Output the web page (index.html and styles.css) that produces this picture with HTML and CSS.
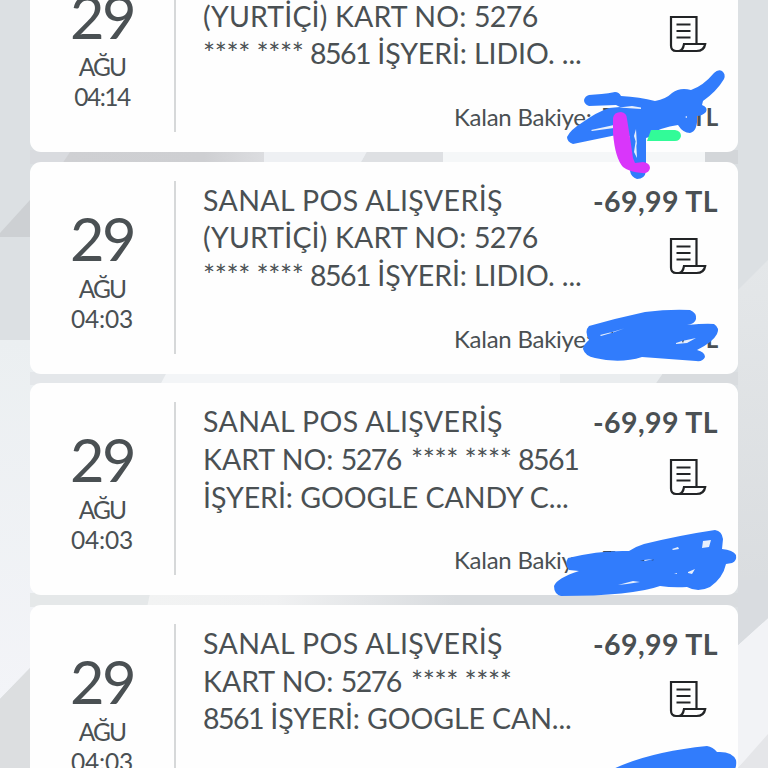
FILE: index.html
```html
<!DOCTYPE html>
<html lang="tr">
<head>
<meta charset="utf-8">
<title>Hesap Hareketleri</title>
<link rel="stylesheet" href="styles.css">
</head>
<body>
<svg class="backdrop" viewBox="0 0 768 768" aria-hidden="true">
  <defs>
    <linearGradient id="low" x1="0" x2="1"><stop offset="0" stop-color="#f2f3f3"/><stop offset=".42" stop-color="#f0f1f2"/><stop offset="1" stop-color="#d9dcdf"/></linearGradient>
    <linearGradient id="right" x1="0" x2="0" y1="0" y2="1"><stop offset="0" stop-color="#e4e7e9"/><stop offset="1" stop-color="#d8dbde"/></linearGradient>
    <linearGradient id="left" x1="0" x2="0" y1="0" y2="1"><stop offset="0" stop-color="#ebeff1"/><stop offset="1" stop-color="#f3f4f8"/></linearGradient>
    <linearGradient id="gray" x1="0" x2="1"><stop offset="0" stop-color="#cfd0d3"/><stop offset=".7" stop-color="#cecfd2"/><stop offset="1" stop-color="#dcdde0"/></linearGradient>
  </defs>
  <path fill="#dce0e3" d="M0 0h768v768H0z"/>
  <path fill="#d9dbdf" d="M30 150h50v14H30z"/>
  <path fill="url(#gray)" d="M70 152h194v12H62z"/>
  <path fill="#eef0f3" d="M264 150h104l-8 14h-96z"/>
  <path fill="#dee0e3" d="M367 152h76v12h-82z"/>
  <path fill="#f5f7f8" d="M443 150h262v14H443z"/>
  <path fill="#d3d6d9" d="M705 150h33v14h-33z"/>
  <path fill="#cdd0d3" d="M30 200v37H0v-4z"/>
  <path fill="url(#left)" d="M0 340h34v324L0 699z"/>
  <path fill="#dcdee0" d="M0 699l30-31v100H0z"/>
  <path fill="#e4e7ea" d="M30 372h138l-8 13H30z"/>
  <path fill="#f3f5f7" d="M167 372h393v13H160z"/>
  <path fill="#eaedef" d="M560 372h104l-9 13h-95z"/>
  <path fill="#d9dcdf" d="M664 372h74v13h-83z"/>
  <path fill="url(#right)" d="M738 290l30-30v358l-30 27z"/>
  <path fill="#f2f3f6" d="M738 645l30-27v120l-30 30z"/>
  <path fill="#e5e6e9" d="M768 734v34h-30z"/>
  <path fill="#e5e8e9" d="M30 593h120l-3 14H30z"/>
  <path fill="url(#low)" d="M150 593h305v14H147z"/>
  <path fill="#d9dcdf" d="M455 593h283v14H455z"/>
  <path fill="#d9dce0" d="M738 580h30v38l-30 27z"/>
</svg>
<svg class="defs" aria-hidden="true">
  <symbol id="receipt" viewBox="0 0 38 38">
    <path d="M27.500 29V2H2v28.500C2 34.500 4 36 7 36h20.500c5 0 8-2.500 8.700-7H15c-.6 4-1.500 7-5.500 7M7.500 9.500h14M7.500 16h14M7.500 22.500h14"/>
  </symbol>
</svg>
<main class="list">
  <article class="card">
    <div class="date"><b class="day">29</b><span class="month">AĞU</span><span class="time t14">04:14</span></div>
    <div class="desc"><p class="head">SANAL POS ALIŞVERİŞ</p><p class="home">(YURTİÇİ) KART NO: <span class="num wide">5276</span></p><p class="long"><span class="mask">****</span><span class="mask">****</span><span class="num">8561</span> İŞYERİ: LIDIO. ...</p></div>
    <div class="side"><strong class="amount">-69,99 TL</strong><svg class="icon"><use href="#receipt"/></svg></div>
    <div class="balance"><span>Kalan Bakiye:</span><b>7<i>TL</i></b></div>
  </article>
  <article class="card">
    <div class="date"><b class="day">29</b><span class="month">AĞU</span><span class="time">04:03</span></div>
    <div class="desc"><p class="head">SANAL POS ALIŞVERİŞ</p><p class="home">(YURTİÇİ) KART NO: <span class="num wide">5276</span></p><p class="long"><span class="mask">****</span><span class="mask">****</span><span class="num">8561</span> İŞYERİ: LIDIO. ...</p></div>
    <div class="side"><strong class="amount">-69,99 TL</strong><svg class="icon"><use href="#receipt"/></svg></div>
    <div class="balance"><span>Kalan Bakiye:</span><b>7<i>TL</i></b></div>
  </article>
  <article class="card">
    <div class="date"><b class="day">29</b><span class="month">AĞU</span><span class="time">04:03</span></div>
    <div class="desc"><p class="head">SANAL POS ALIŞVERİŞ</p><p>KART NO: <span class="num">5276</span> <span class="mask inset">****</span><span class="mask">****</span><span class="num">8561</span></p><p class="candy">İŞYERİ: GOOGLE CANDY C...</p></div>
    <div class="side"><strong class="amount">-69,99 TL</strong><svg class="icon"><use href="#receipt"/></svg></div>
    <div class="balance"><span>Kalan Bakiye:</span><b>7</b></div>
  </article>
  <article class="card">
    <div class="date"><b class="day">29</b><span class="month">AĞU</span><span class="time">04:03</span></div>
    <div class="desc"><p class="head">SANAL POS ALIŞVERİŞ</p><p>KART NO: <span class="num">5276</span> <span class="mask inset">****</span><span class="mask">****</span></p><p class="long"><span class="num">8561</span> İŞYERİ: GOOGLE CAN...</p></div>
    <div class="side"><strong class="amount">-69,99 TL</strong><svg class="icon"><use href="#receipt"/></svg></div>
  </article>
</main>
<svg class="ink" viewBox="0 0 768 768" aria-hidden="true">
  <g class="blue">
    <path d="M589 95C597 94 606 94 615 92Q619 92 621 96Q640 97 655 101Q666 99 672 93Q680 87 691 90Q703 86 714 73Q718 69 722 71Q726 74 724 79Q717 91 703 101L702 105Q708 107 706 112Q702 116 697 116Q698 131 690 133Q683 133 678 125Q670 126 661 129C656 130 653 137 646 138V171Q645 179 637 179Q631 177 630 171V137L626 133L573 144Q567 142 567 137Q570 130 583 122Q597 112 609 108L620 107L616 105L589 106Q584 104 584 100Q585 96 589 95Z"/>
    <path d="M589 326Q617 318 645 312Q669 309 690 310Q697 313 696 319Q695 324 687 325Q707 323 714 324Q720 328 717 334Q713 342 697 350Q705 352 705 357Q703 362 696 361L642 357Q620 364 595 358Q585 356 583 349Q583 345 589 340Q584 331 589 326Z"/>
    <path d="M568 558Q600 550 629 551Q637 546 644 544Q681 535 715 530Q722 531 723 539L722 549Q733 550 736 555Q737 561 732 563L726 564Q723 578 710 587Q698 593 687 587Q673 588 660 586Q632 596 561 596Q554 594 554 586Q557 578 579 571L569 570Q564 564 568 558Z"/>
    <path d="M609 771Q647 752 707 746Q713 747 717 752Q732 751 736 760Q737 766 734 771Z"/>
  </g>
  <g class="gap">
    <path d="M619 107.500L632 106L641 107.500V109ZM591 130L614 125V128L592 131ZM636 129L637 146L634 136ZM636 139L637 158L634 152ZM685 117l2-1v2z"/>
    <path d="M600 335L614 331.500L624 328.500L613 332.500L601 336ZM676 343L682 341L696 338L687 343L676 344Z"/>
    <path d="M703 541l8-1-2 7-7 1zM672 549l6-2 1 2-6 1zM644 560l9-1-8 2zM618 585L633 581L640 582L627 584ZM688 572l7-3-3 5-4-1zM674 574l3-1v1z"/>
  </g>
  <path class="mark" d="M610 333l3-1v1zM682 341l2-1-1 3zM602 551.500l9-.5v1zM640 560.500l4-.5v1zM651 560l3-.5-1 1z"/>
  <path class="green" d="M651 130H675Q681 131 681 136Q680 141 675 141H647Z"/>
  <path class="pink" d="M613 118Q614 112 621 112Q627 113 627 119Q630 137 633 158L635 163L643 162Q650 163 650 168Q649 174 642 173Q629 172 623 167Q615 158 613 133Z"/>
</svg>
</body>
</html>
```
FILE: styles.css
```css
* { box-sizing: border-box; }
body {
  margin: 0;
  height: 768px;
  overflow: hidden;
  position: relative;
  font-family: Lato, "Liberation Sans", sans-serif;
  color: #4a5053;
}
p { margin: 0; }
.backdrop, .ink { position: absolute; top: 0; left: 0; width: 768px; height: 768px; }
.ink { pointer-events: none; }
.defs { display: none; }
.list {
  position: relative;
  display: grid;
  gap: 9.700px;
  margin: -60px 30px 0;
}
.card {
  display: grid;
  grid-template-columns: 146px 1fr 115px;
  grid-template-rows: 155px 57px;
  height: 212px;
  background: #fefefe;
  border-radius: 11px;
}
.date {
  grid-row: 1 / 3;
  display: flex;
  flex-direction: column;
  align-items: center;
  margin: 19px 0 20px;
  padding-top: 21px;
  border-right: 2px solid #d6d8d9;
}
.day { font-size: 59.500px; line-height: 72px; font-weight: 400; letter-spacing: -2.500px; }
.month { font-size: 24.500px; line-height: 30px; letter-spacing: -1.800px; }
.time { font-size: 24.500px; line-height: 30px; letter-spacing: -.2px; }
.t14 { letter-spacing: -1.500px; }
.desc {
  padding: 20px 0 0 27px;
  font-size: 28.500px;
  line-height: 37.700px;
  white-space: nowrap;
}
.head { letter-spacing: .4px; }
.home { letter-spacing: .15px; }
.long { letter-spacing: -.1px; }
.candy { letter-spacing: -.05px; }
.num { letter-spacing: -1.500px; }
.wide { letter-spacing: -.6px; }
.mask { display: inline-block; width: 53.500px; letter-spacing: -.4px; }
.inset { margin-left: 3px; }
.side {
  display: flex;
  flex-direction: column;
  align-items: flex-end;
  padding: 22px 20px 0 0;
}
.amount { font-size: 28.500px; line-height: 35px; white-space: nowrap; letter-spacing: .4px; }
.icon { width: 38px; height: 38px; margin: 18px 11.500px 0 0; fill: none; stroke: #222426; stroke-width: 2.200; }
.balance {
  grid-column: 2 / 4;
  display: flex;
  justify-content: space-between;
  padding: 7px 20px 0 278px;
  font-size: 24px;
  line-height: 30px;
  letter-spacing: -.25px;
  white-space: nowrap;
}
.balance b { display: flex; justify-content: space-between; width: 116px; }
.balance i { font-style: normal; }
.blue { fill: #317cfc; }
.gap { fill: #e7effc; }
.mark { fill: #2b4467; }
.green { fill: #32fb98; }
.pink { fill: #d936fa; }
```
